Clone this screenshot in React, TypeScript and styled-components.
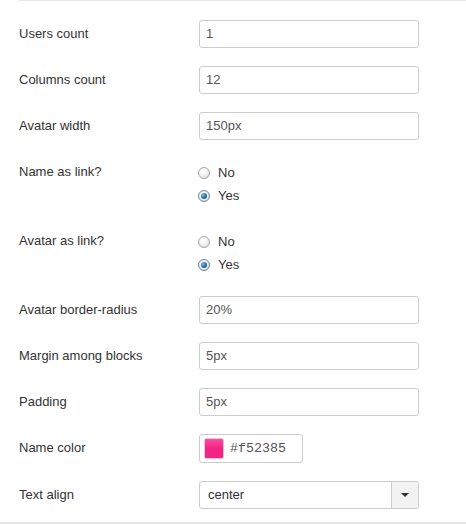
import React from "react";
import styled, { createGlobalStyle } from "styled-components";

const Global = createGlobalStyle`
  html, body { margin: 0; padding: 0; background: #fff; }
  body { font-family: "Liberation Sans", Arial, sans-serif; }
  * { box-sizing: border-box; }
`;

const Page = styled.div`
  width: 466px;
  height: 524px;
  overflow: hidden;
  background: #fff;
`;

const TopRule = styled.div`
  margin-left: 19px;
  border-top: 1px solid #e8e8e8;
`;

const Form = styled.div`
  display: flex;
  flex-direction: column;
  gap: 18px;
  padding: 19px 0 13px 19px;
`;

const Row = styled.div`
  display: grid;
  grid-template-columns: 180px 220px;
  align-items: start;
`;

const Label = styled.div`
  font-size: 13px;
  line-height: 28px;
  color: #333;
`;

const TextInput = styled.div`
  height: 28px;
  border: 1px solid #ccc;
  border-radius: 3px;
  padding: 0 6px;
  font-size: 13px;
  line-height: 26px;
  color: #555;
  background: #fff;
`;

const RadioGroup = styled.div`
  display: flex;
  flex-direction: column;
  padding: 3px 0 2px;
`;

const RadioLine = styled.div`
  height: 23px;
  display: flex;
  align-items: center;
  gap: 8px;
  font-size: 13px;
  color: #333;
`;

const RadioDot = styled.span<{ $checked?: boolean }>`
  width: 12px;
  height: 12px;
  border-radius: 50%;
  border: 1px solid ${(p) => (p.$checked ? "#6b7f94" : "#a7a7a7")};
  background: radial-gradient(circle at 40% 35%, #ffffff 0%, #f2f2f2 45%, #d4d4d4 100%);
  display: flex;
  align-items: center;
  justify-content: center;
  margin-left: -1px;
  &::after {
    content: "";
    display: ${(p) => (p.$checked ? "block" : "none")};
    width: 6px;
    height: 6px;
    border-radius: 50%;
    background: radial-gradient(circle at 35% 35%, #7fc0ef 0%, #2a6fae 50%, #133c66 100%);
  }
`;

const ColorBox = styled.div`
  width: 104px;
  height: 29px;
  border: 1px solid #ccc;
  border-radius: 3px;
  display: flex;
  align-items: center;
  gap: 6px;
  padding: 0 4px;
`;

const Swatch = styled.span<{ $color: string }>`
  width: 20px;
  height: 21px;
  border-radius: 2px;
  background: linear-gradient(${(p) => p.$color}cc 0%, ${(p) => p.$color} 50%);
  border: 1px solid #e8cbd9;
`;

const MonoText = styled.span`
  font-family: "Liberation Mono", "DejaVu Sans Mono", monospace;
  font-size: 13.3px;
  color: #555;
`;

const Select = styled.div`
  height: 28px;
  border: 1px solid #ccc;
  border-radius: 3px;
  display: flex;
  font-size: 13px;
  color: #333;
`;

const SelectValue = styled.span`
  flex: 1;
  line-height: 26px;
  padding-left: 8px;
`;

const SelectButton = styled.span`
  width: 27px;
  border-left: 1px solid #ccc;
  background: #f2f2f2;
  border-radius: 0 2px 2px 0;
  display: flex;
  align-items: center;
  justify-content: center;
  &::after {
    content: "";
    border-left: 4px solid transparent;
    border-right: 4px solid transparent;
    border-top: 4px solid #333;
  }
`;

const BottomRule = styled.div`
  border-top: 2px solid #e4e4e4;
`;

const inputs1 = [
  ["Users count", "1"],
  ["Columns count", "12"],
  ["Avatar width", "150px"],
];
const inputs2 = [
  ["Avatar border-radius", "20%"],
  ["Margin among blocks", "5px"],
  ["Padding", "5px"],
];

const Radio = ({ label }: { label: string }) => (
  <Row>
    <Label>{label}</Label>
    <RadioGroup>
      <RadioLine>
        <RadioDot />
        No
      </RadioLine>
      <RadioLine>
        <RadioDot $checked />
        Yes
      </RadioLine>
    </RadioGroup>
  </Row>
);

export default function App() {
  return (
    <Page>
      <Global />
      <TopRule />
      <Form>
        {inputs1.map(([l, v]) => (
          <Row key={l}>
            <Label>{l}</Label>
            <TextInput>{v}</TextInput>
          </Row>
        ))}
        <Radio label="Name as link?" />
        <Radio label="Avatar as link?" />
        {inputs2.map(([l, v]) => (
          <Row key={l}>
            <Label>{l}</Label>
            <TextInput>{v}</TextInput>
          </Row>
        ))}
        <Row>
          <Label>Name color</Label>
          <ColorBox>
            <Swatch $color="#f52385" />
            <MonoText>#f52385</MonoText>
          </ColorBox>
        </Row>
        <Row>
          <Label>Text align</Label>
          <Select>
            <SelectValue>center</SelectValue>
            <SelectButton />
          </Select>
        </Row>
      </Form>
      <BottomRule />
    </Page>
  );
}
